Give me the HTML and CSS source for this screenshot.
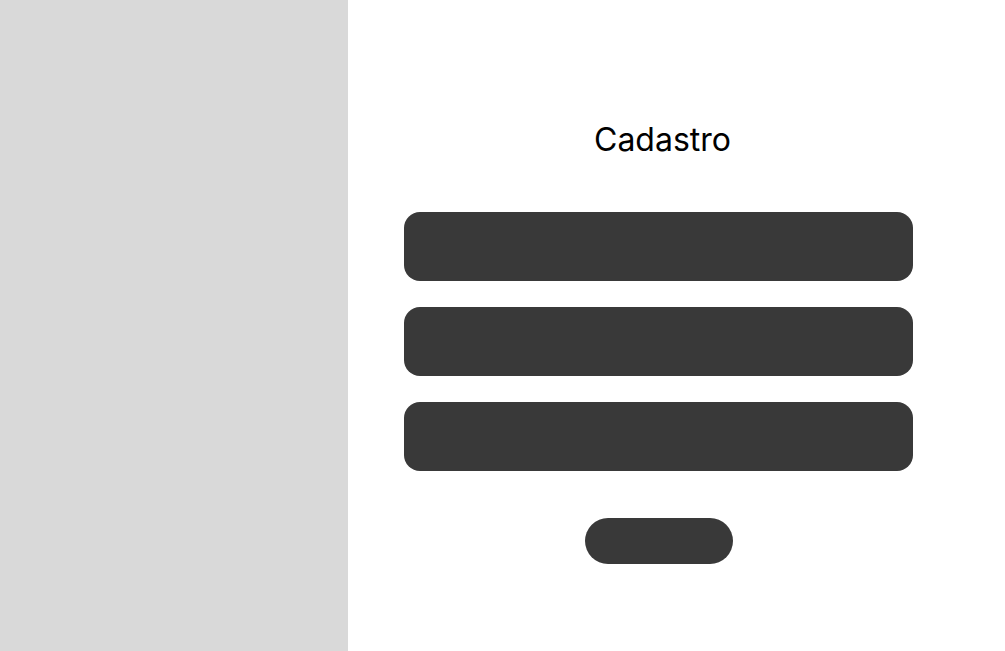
FILE: index.html
```html
<!DOCTYPE html>
<html lang="pt-BR">
<head>
    <meta charset="UTF-8">
    <title>Cadastro</title>
    <link rel="stylesheet" href="styles.css">
</head>
<body>
<div class="page">
    <aside class="side"></aside>
    <main class="content">
        <form class="form">
            <h1 class="title">Cadastro</h1>
            <div class="field"></div>
            <div class="field"></div>
            <div class="field"></div>
            <button type="button" class="btn"></button>
        </form>
    </main>
</div>
</body>
</html>
```

FILE: styles.css
```css
*{
    margin: 0;
    padding: 0;
    box-sizing: border-box;
}
html,body{
    width: 100%;
    height: 100%;
}
body{
    font-family: Inter, "Noto Sans", sans-serif;
    background: #fff;
}
.page{
    display: flex;
    height: 100%;
}
.side{
    width: 348px;
    flex-shrink: 0;
    background: #d9d9d9;
}
.content{
    flex: 1;
    padding: 120px 0 0 56px;
}
.form{
    width: 509px;
    display: flex;
    flex-direction: column;
    align-items: center;
    gap: 26px;
}
.title{
    font-size: 32px;
    font-weight: 400;
    line-height: 39px;
    color: #000;
    margin-bottom: 27px;
    padding-left: 8px;
}
.field{
    width: 100%;
    height: 69px;
    border-radius: 16px;
    background: #393939;
}
.btn{
    width: 148px;
    height: 46px;
    border: none;
    border-radius: 23px;
    background: #393939;
    margin-top: 21px;
}
```
